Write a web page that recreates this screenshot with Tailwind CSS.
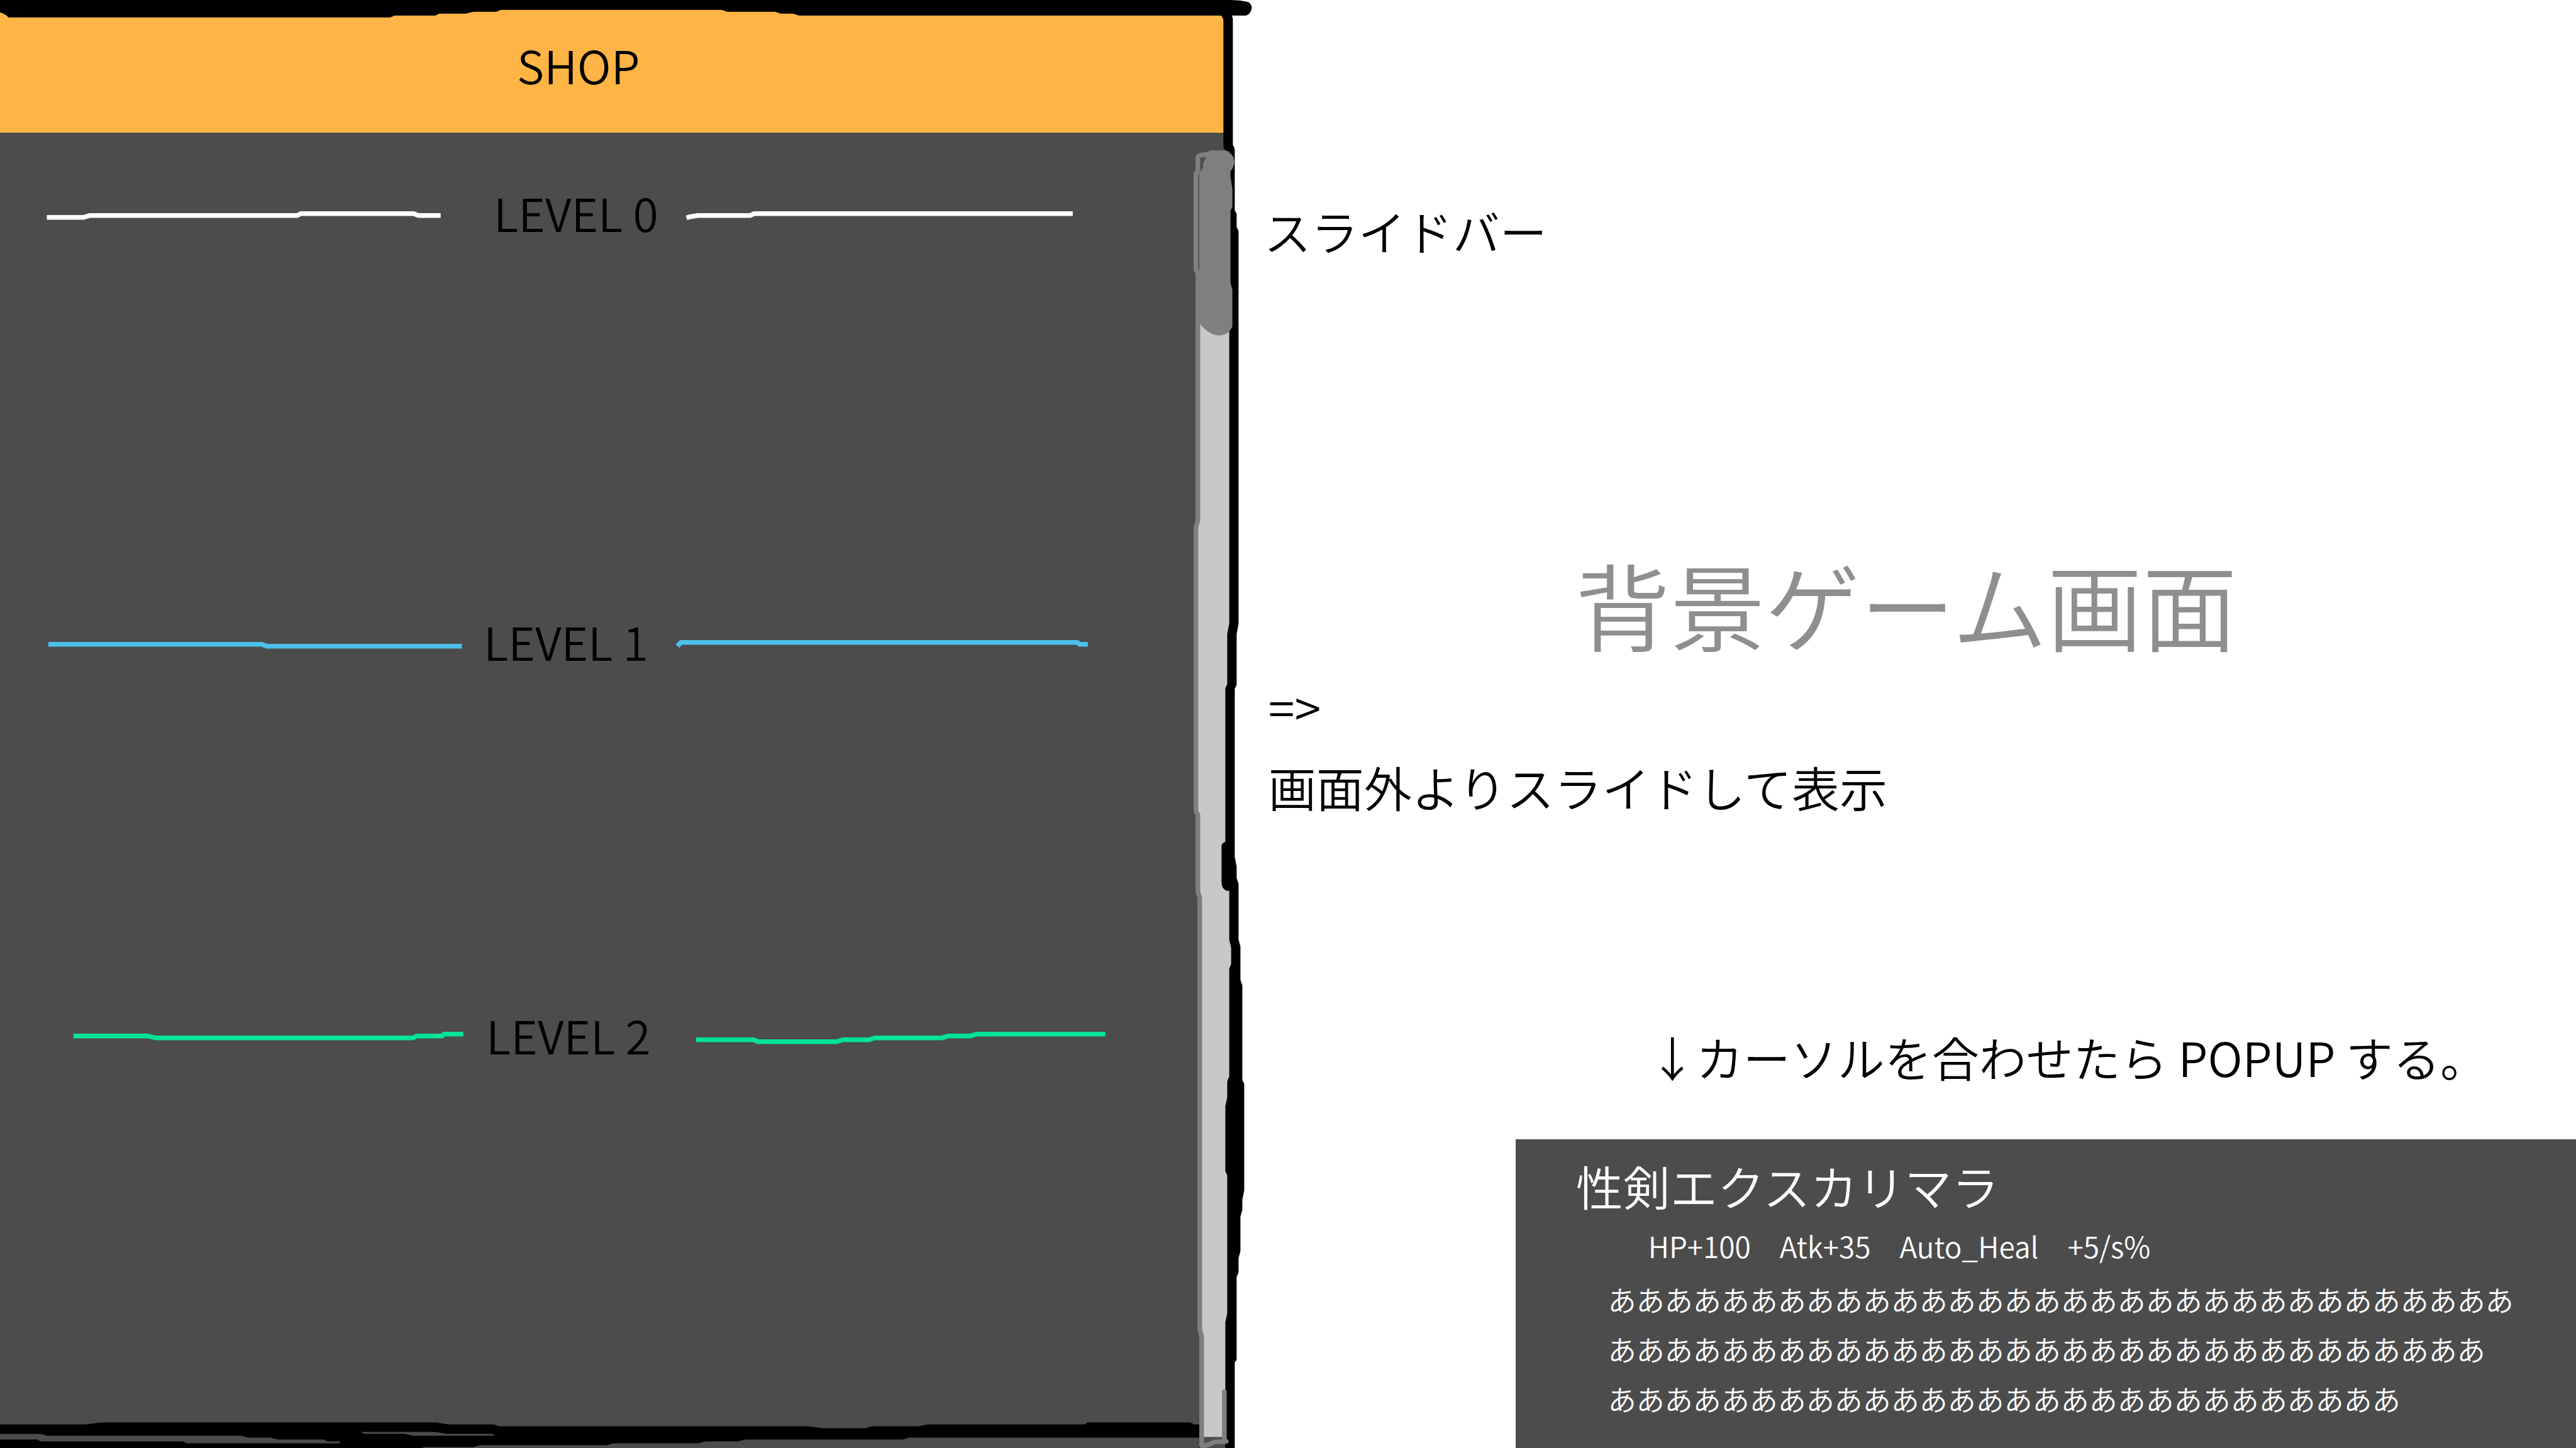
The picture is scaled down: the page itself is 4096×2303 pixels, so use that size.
<!DOCTYPE html>
<html lang="ja">
<head>
<meta charset="utf-8">
<title>SHOP</title>
<script src="https://cdn.jsdelivr.net/npm/@tailwindcss/browser@4"></script>
</head>
<body class="bg-white">
<div class="relative flex min-h-screen overflow-hidden font-['Noto_Sans_CJK_JP',sans-serif] font-[350] text-[75px] leading-[100px] text-black">

  <!-- Shop panel -->
  <aside class="flex w-[47.7%] shrink-0 flex-col bg-[#4c4c4c] text-[73px]">
    <header class="flex h-[211px] items-center bg-[#ffb545] pb-2 pl-[822px]">
      <h1>SHOP</h1>
    </header>

    <section class="mt-[76px] h-[682px]">
      <div class="grid grid-cols-[990fr_430fr_1176fr] items-center">
        <svg class="block w-full" viewBox="0 388 990 133" fill="none" stroke="#fff" stroke-width="10" stroke-linejoin="round" aria-hidden="true">
          <path d="M99 466H177L190 462H628L636 458H874L884 462H931"/>
        </svg>
        <h2 class="pl-10">LEVEL 0</h2>
        <svg class="block w-full" viewBox="1420 388 1176 133" fill="none" stroke="#fff" stroke-width="10" stroke-linejoin="round" aria-hidden="true">
          <path d="M1450 467L1456 465L1474 462H1585L1593 458H2266"/>
        </svg>
      </div>
    </section>

    <section class="h-[626px]">
      <div class="grid grid-cols-[990fr_430fr_1176fr] items-center">
        <svg class="block w-full" viewBox="0 1295 990 133" fill="none" stroke="#4bc0eb" stroke-width="10" stroke-linejoin="round" aria-hidden="true">
          <path d="M102 1369H553L563 1373H976"/>
        </svg>
        <h2 class="pl-6">LEVEL 1</h2>
        <svg class="block w-full" viewBox="1420 1295 1176 133" fill="none" stroke="#4bc0eb" stroke-width="10" stroke-linejoin="round" aria-hidden="true">
          <path d="M1431 1373L1438 1365H2276L2280 1369H2298"/>
        </svg>
      </div>
    </section>

    <section>
      <div class="grid grid-cols-[990fr_430fr_1176fr] items-center">
        <svg class="block w-full" viewBox="0 2126 990 133" fill="none" stroke="#00e396" stroke-width="10" stroke-linejoin="round" aria-hidden="true">
          <path d="M155 2196H312L328 2200H873L880 2196H934L938 2192H979"/>
        </svg>
        <h2 class="pl-7">LEVEL 2</h2>
        <svg class="block w-full" viewBox="1420 2126 1176 133" fill="none" stroke="#00e396" stroke-width="10" stroke-linejoin="round" aria-hidden="true">
          <path d="M1470 2204H1592L1600 2208H1768L1780 2204H1836L1847 2200H1990L2003 2196H2050L2063 2192H2335"/>
        </svg>
      </div>
    </section>
  </aside>

  <!-- Game screen behind the panel, with its notes -->
  <main class="flex min-w-0 flex-1 flex-col pt-[317px]">
    <p class="pl-[56px]">スライドバー</p>
    <h2 class="mt-[442px] pl-[551px] text-[151px] leading-[200px] text-[#8f8f8f]">背景ゲーム画面</h2>
    <div class="mt-[14px] flex flex-col gap-[28px] pl-[63px] text-[76px]">
      <p>=&gt;</p>
      <p>画面外よりスライドして表示</p>
    </div>
    <p class="mt-[330px] pl-[668px]">↓カーソルを合わせたら POPUP する。</p>

    <article class="mt-[81px] ml-[456px] flex-1 bg-[#4c4c4c] pt-[24px] pb-[30px] text-[45px] leading-[79px] whitespace-nowrap text-white">
      <h3 class="pl-[96px] text-[75px] leading-[100px]">性剣エクスカリマラ</h3>
      <p class="mt-[6px] pl-[211px] text-[46px]">HP+100　Atk+35　Auto_Heal　+5/s%</p>
      <p class="mt-[6px] pl-[147px]">ああああああああああああああああああああああああああああああああ<br>あああああああああああああああああああああああああああああああ<br>ああああああああああああああああああああああああああああ</p>
    </article>
  </main>

  <!-- Hand-drawn outline and slide bar -->
  <svg class="pointer-events-none absolute inset-0 h-full w-full" viewBox="0 0 5443 3061" preserveAspectRatio="none" aria-hidden="true">
    <path d="M0 0H2600L2620 1L2637 4Q2645 9 2645 16Q2644 29 2633 33H1688L1676 29H1650L1638 25H1536L1526 21H1058L1049 25H1000L984 29H928L920 33H834L824 37H18L14 33Q8 29 0 26Z"/>
    <path fill-rule="evenodd" d="M0 3011H90L108 3007H460L474 3011H522L527 3015H854L870 3019H914L921 3015H970L980 3011H1146L1149 3007H1257L1262 3011H1268V3039H960L954 3043H787L780 3047H745L738 3051H648L642 3055H507L500 3059H448L446 3061H0V3043L2 3043H39L43 3047H193L198 3051H358L360 3047H346L342 3043H294L286 3039H262L255 3035H50L43 3031H0ZM381 3027H459L472 3031H520L523 3035H436L428 3031H385Z" transform="scale(2 1)"/>
    <path d="M2600 30Q2605 35 2605 42V306L2609 315V445L2613 452V480L2617 488V1319L2613 1340V1448L2609 1456V1812L2613 1832V1856L2617 1868V1986L2621 2001V2071L2625 2083V2283L2629 2291V2516L2625 2536V2558L2621 2572V2645L2617 2660V2690L2613 2699V2875L2609 2880V3061H2534V3035H2589V2795L2593 2777V2484L2589 2476V2338L2593 2320V2286L2597 2276V2048L2601 2038V2003L2597 1987V1883H2592Q2581 1880 2581 1866V1787Q2583 1781 2589 1780V1455L2593 1446V1340L2597 1319V320Q2585 318 2585 308V45Q2585 36 2578 31Z"/>
    <path fill="#c8c8c8" d="M2531 680H2597V1319L2593 1340V1446L2589 1455V1780Q2583 1781 2581 1787V1866Q2582 1880 2592 1883H2597V1987L2601 2003V2038L2597 2048V2276L2593 2286V2320L2589 2338V2476L2593 2484V2777L2589 2795V3038H2537V2815L2533 1895L2528 1715V1115Z"/>
    <path fill="#4c4c4c" d="M2540 3038H2589V3061H2538Z"/>
    <g fill="none" stroke="#7f7f7f" stroke-width="10" stroke-linejoin="round" stroke-linecap="round">
      <path d="M2562 325L2538 328Q2531 329 2531 334V362L2527 366V570L2531 578V1100L2527 1115V1715L2531 1722V1885L2535 1898V2810L2539 2825V3056L2550 3055L2568 3048L2591 3047"/>
      <path d="M2587 2942V3044"/>
    </g>
    <path fill="#7f7f7f" d="M2555 318H2588Q2608 325 2608 342Q2608 353 2600 362V373L2604 400V437L2600 446V598L2604 612V690Q2596 709 2573 709Q2556 708 2536 686L2528 571H2534V366L2542 355V346Q2546 336 2555 318Z"/>
  </svg>
</div>
</body>
</html>
